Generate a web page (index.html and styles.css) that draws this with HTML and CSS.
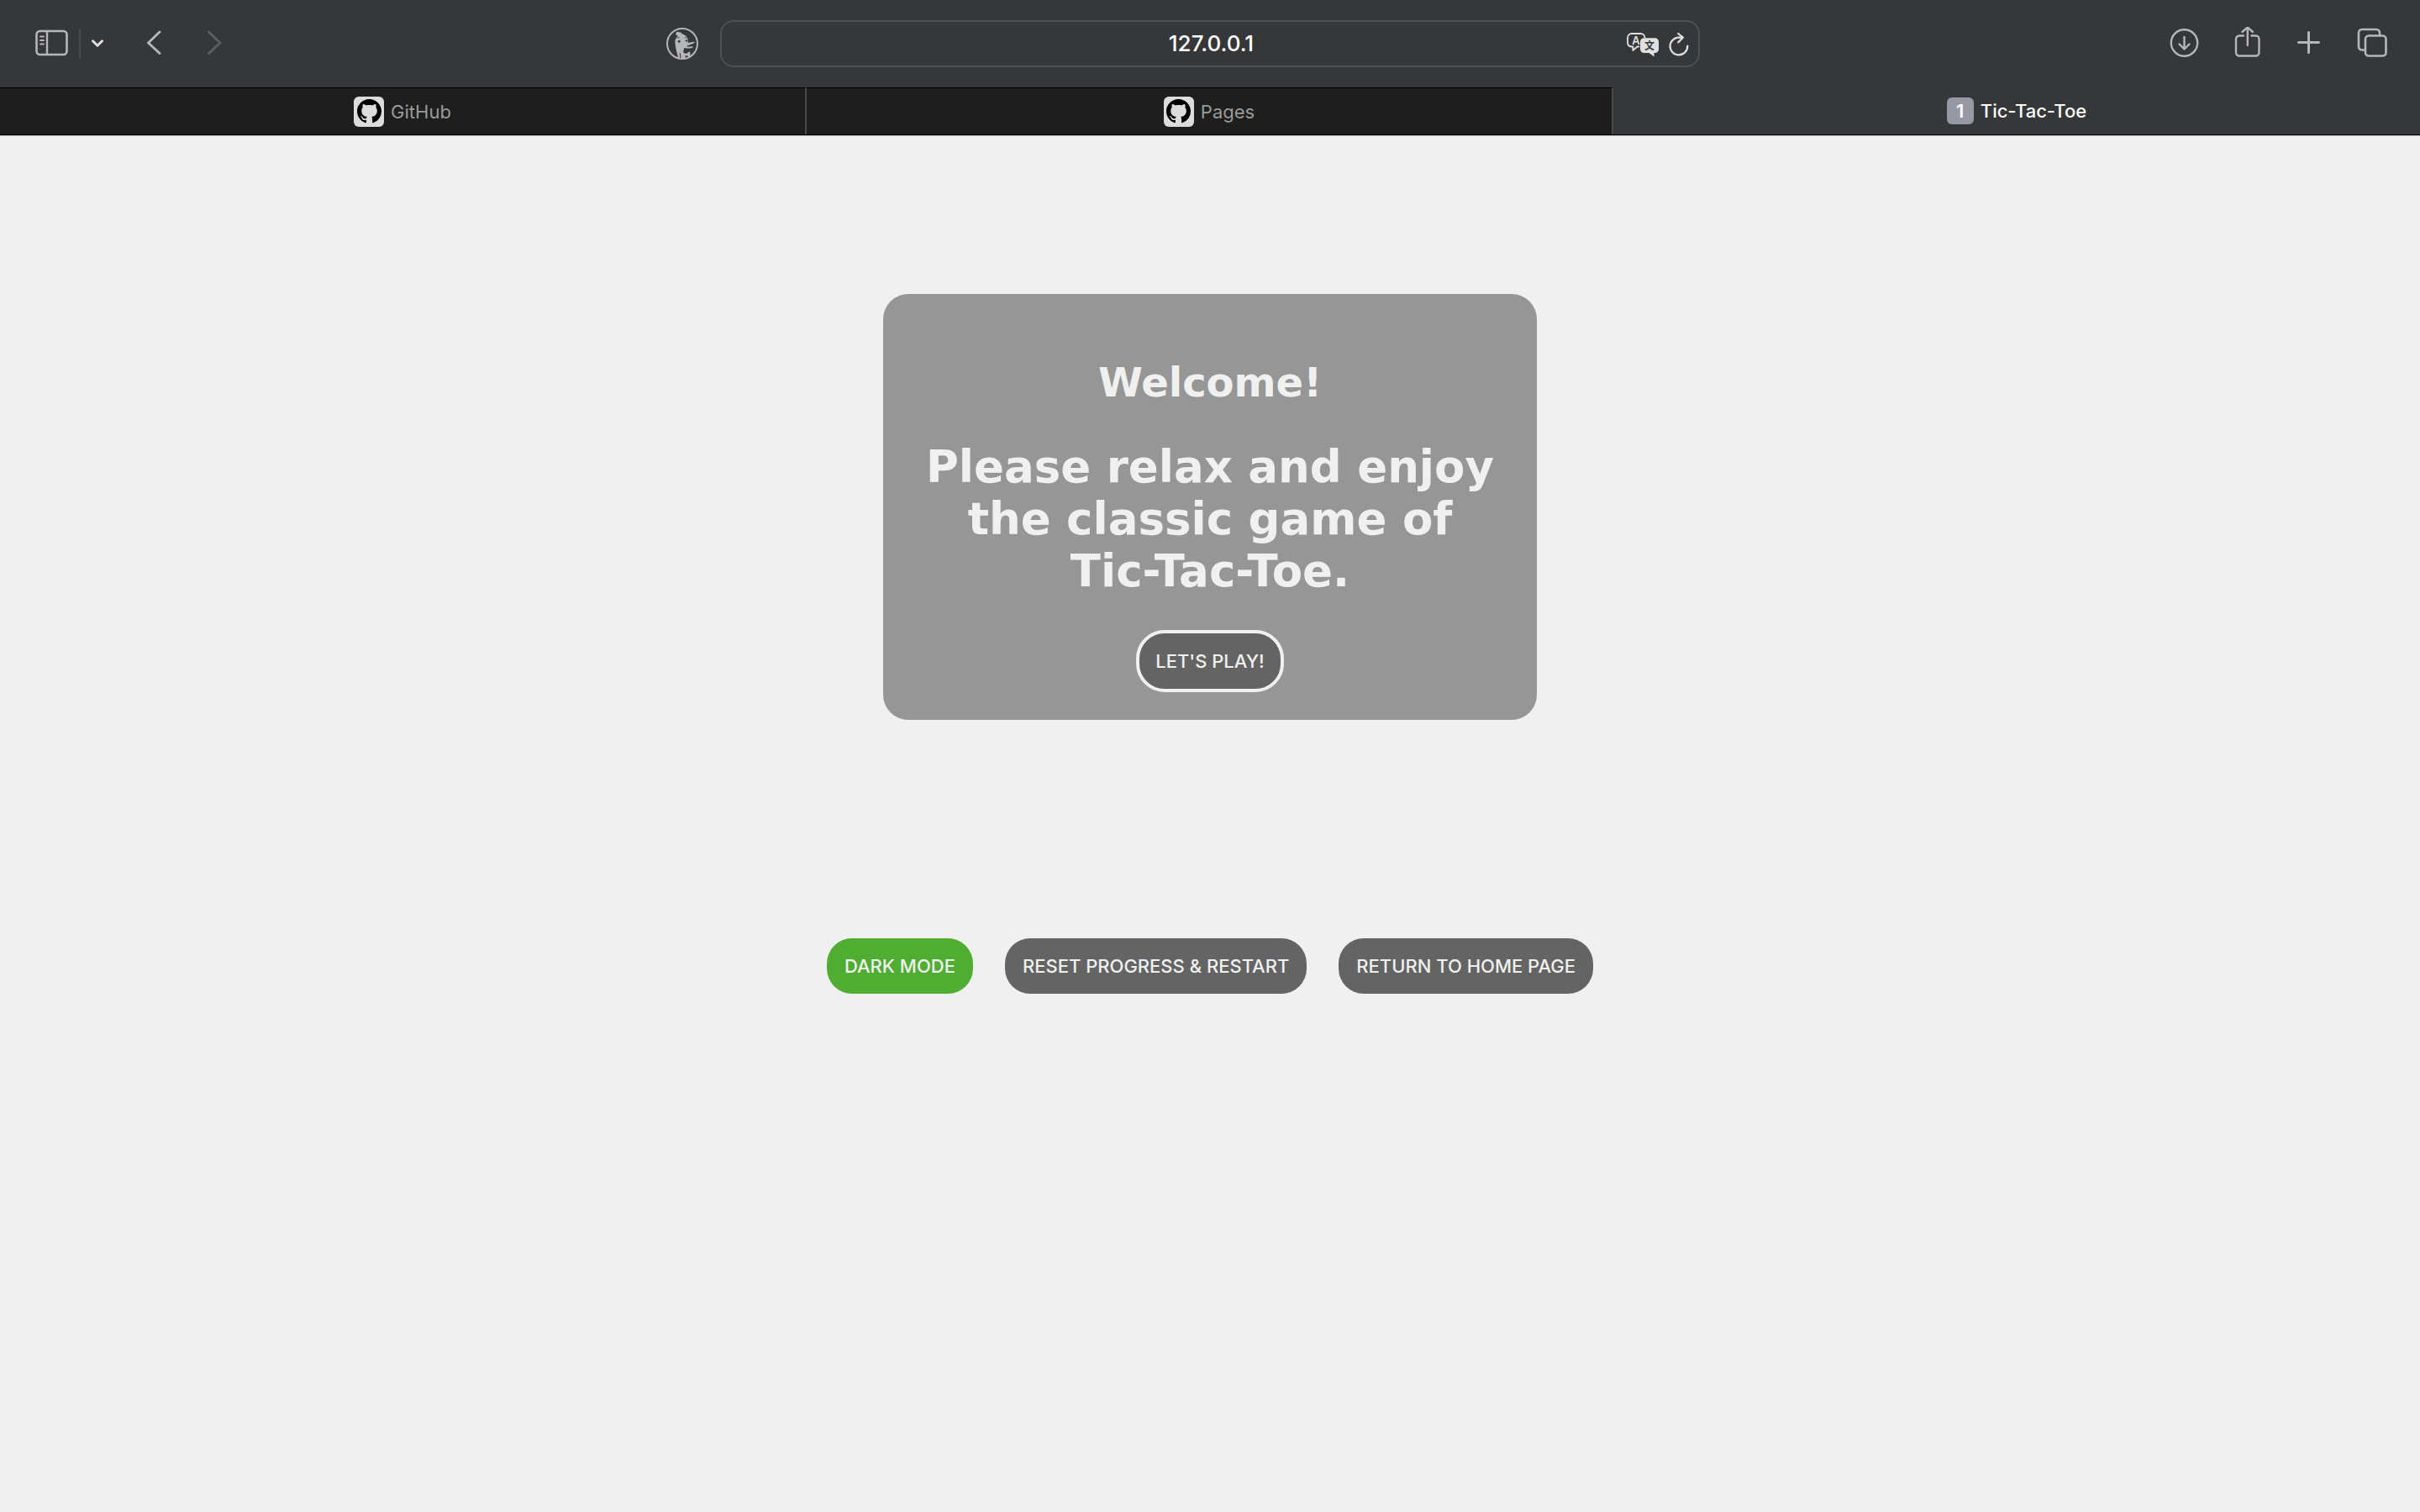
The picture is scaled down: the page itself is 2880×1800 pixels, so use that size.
FILE: index.html
```html
<!DOCTYPE html>
<html lang="en">
<head>
<meta charset="utf-8">
<title>Tic-Tac-Toe</title>
<link rel="stylesheet" href="styles.css">
</head>
<body>
<svg class="sprite" aria-hidden="true">
  <symbol id="octocat" viewBox="0 0 16 16">
    <path d="M8 0C3.58 0 0 3.58 0 8c0 3.54 2.29 6.53 5.47 7.59.4.07.55-.17.55-.38 0-.19-.01-.82-.01-1.49-2.01.37-2.53-.49-2.69-.94-.09-.23-.48-.94-.82-1.13-.28-.15-.68-.52-.01-.53.63-.01 1.08.58 1.23.82.72 1.21 1.87.87 2.33.66.07-.52.28-.87.51-1.07-1.78-.2-3.64-.89-3.64-3.95 0-.87.31-1.59.82-2.15-.08-.2-.36-1.02.08-2.12 0 0 .67-.21 2.2.82.64-.18 1.32-.27 2-.27.68 0 1.36.09 2 .27 1.53-1.04 2.2-.82 2.2-.82.44 1.1.16 1.92.08 2.12.51.56.82 1.27.82 2.15 0 3.07-1.87 3.75-3.65 3.95.29.25.54.73.54 1.48 0 1.07-.01 1.93-.01 2.2 0 .21.15.46.55.38A8.01 8.01 0 0 0 16 8c0-4.42-3.58-8-8-8Z"/>
  </symbol>
</svg>

<header class="browser">
  <div class="toolbar">
    <div class="tools-left">
      <button class="icon-button" type="button" aria-label="Show sidebar">
        <svg width="40" height="40" viewBox="0 0 40 40" fill="none" stroke="currentColor" stroke-linecap="round">
          <rect x="1.5" y="5" width="36" height="28" rx="4" stroke-width="2.6"/>
          <path d="M14 5v28" stroke-width="2.4"/>
          <path d="M6 11.5h4M6 16h4M6 20.500h4" stroke-width="2"/>
        </svg>
      </button>
      <span class="divider"></span>
      <button class="icon-button icon-button--bright" type="button" aria-label="Tab groups">
        <svg width="16" height="40" viewBox="0 0 16 40" fill="none" stroke="currentColor" stroke-width="3" stroke-linecap="round" stroke-linejoin="round">
          <path d="M2.500 16.800 8 22.300l5.500-5.500"/>
        </svg>
      </button>
      <button class="icon-button nav-back" type="button" aria-label="Back">
        <svg width="18" height="40" viewBox="0 0 18 40" fill="none" stroke="currentColor" stroke-width="3" stroke-linecap="round" stroke-linejoin="round">
          <path d="M16 6 2.500 19 16 31.500"/>
        </svg>
      </button>
      <button class="icon-button nav-forward" type="button" aria-label="Forward" disabled>
        <svg width="18" height="40" viewBox="0 0 18 40" fill="none" stroke="currentColor" stroke-width="3" stroke-linecap="round" stroke-linejoin="round">
          <path d="M2.500 6 16 19 2.500 31.500"/>
        </svg>
      </button>
      <button class="icon-button privacy" type="button" aria-label="DuckDuckGo Privacy">
        <svg width="40" height="40" viewBox="0 0 40 40">
          <circle cx="20" cy="20" r="18" fill="none" stroke="currentColor" stroke-width="2"/>
          <path fill="currentColor" d="M12.500 6.500c2.500-.9 5.500-.2 7.500 2 3.600.8 6.300 3.500 6.600 6.800.2 1.400.2 2.700.1 3.800 2.400-.1 5-1.400 7.500-1.300 1 .1.800 1-.1 1.500-2 1.200-5 2-7.900 2.900-1.600.7-1 1.300.4 1.300 2 .1 4.400-.4 5.800-.2.800.3.500 1.100-.4 1.500-3 1.200-6.500.9-9.200.2-1.300 1.500-1.700 3.600-1.400 5.800l3 1.200 4.400-2.700c.9 1.700.9 5 .3 7l-4-2.300-1.600.6.4 3.400-8.500-.2c-1.700-6-3.600-13-4-18.800-.2-3.800.9-6.800 3.600-8.300l-2.600-1.200z"/>
          <circle cx="16.200" cy="17.200" r="1.500" fill="#363739"/>
          <circle cx="25" cy="16.400" r="1.200" fill="#363739"/>
          <path d="M13.300 13.600c1-.9 2.100-1 3.200-.6M22.800 13c.7-.5 1.500-.5 2.100-.1M17.300 31l.5 6.500" fill="none" stroke="#363739"/>
        </svg>
      </button>
    </div>

    <div class="address">
      <input class="address-input" type="text" value="127.0.0.1" aria-label="Address">
      <button class="icon-button icon-button--bright" type="button" aria-label="Translate">
        <svg width="38" height="40" viewBox="0 0 38 40">
          <path d="M15 23.500H12.500L7.300 28v-4.500H6a5 5 0 0 1-5-4V13a5 5 0 0 1 5-5h10.500a5 5 0 0 1 5 5" fill="none" stroke="currentColor" stroke-width="1.800" stroke-linejoin="round"/>
          <text class="glyph-latin" x="11" y="20.500" text-anchor="middle">A</text>
          <path fill="currentColor" d="M20.500 13.200H33.500a4.500 4.500 0 0 1 4.500 4.500v8.800a4.500 4.500 0 0 1-4.500 4.500H32.500v4.500L26.500 31h-6a4.500 4.500 0 0 1-4.500-4.500v-8.800a4.500 4.500 0 0 1 4.500-4.500z"/>
          <text class="glyph-han" x="27" y="26.500" text-anchor="middle">文</text>
        </svg>
      </button>
      <button class="icon-button icon-button--bright" type="button" aria-label="Reload">
        <svg width="24" height="40" viewBox="0 0 24 40" fill="none" stroke="currentColor" stroke-width="2.200" stroke-linecap="round" stroke-linejoin="round">
          <path d="M22.300 22.500A10.400 10.400 0 1 1 12 12.600h4.500M11.200 8l5.700 4.700-5.700 5.700"/>
        </svg>
      </button>
    </div>

    <div class="tools-right">
      <button class="icon-button" type="button" aria-label="Downloads">
        <svg width="36" height="40" viewBox="0 0 36 40" fill="none" stroke="currentColor" stroke-width="2.400" stroke-linecap="round" stroke-linejoin="round">
          <circle cx="18.500" cy="19" r="15.700"/>
          <path d="M18.500 12v14.500M12.500 20.500l6 6 6-6"/>
        </svg>
      </button>
      <button class="icon-button" type="button" aria-label="Share">
        <svg width="32" height="40" viewBox="0 0 32 40" fill="none" stroke="currentColor" stroke-width="2.400" stroke-linecap="round" stroke-linejoin="round">
          <path d="M11 10.500H6a4 4 0 0 0-4 4V30.500a4 4 0 0 0 4 4H25.500a4 4 0 0 0 4-4v-16a4 4 0 0 0-4-4h-5"/>
          <path d="M15.800 22V1M9.500 6l6.300-5.500L22 6"/>
        </svg>
      </button>
      <button class="icon-button" type="button" aria-label="New tab">
        <svg width="30" height="40" viewBox="0 0 30 40" fill="none" stroke="currentColor" stroke-width="3" stroke-linecap="round">
          <path d="M2.500 18.500h24M14.500 6.500v24"/>
        </svg>
      </button>
      <button class="icon-button" type="button" aria-label="Tab overview">
        <svg width="36" height="40" viewBox="0 0 36 40" fill="none" stroke="currentColor" stroke-width="2.600">
          <path d="M9 27.500H6a4 4 0 0 1-4-4V7a4 4 0 0 1 4-4H23a4 4 0 0 1 4 4v3"/>
          <rect x="10" y="10.500" width="24.500" height="24" rx="4"/>
        </svg>
      </button>
    </div>
  </div>

  <nav class="tabs" aria-label="Tabs">
    <a class="tab" href="#github">
      <span class="favicon"><svg width="29" height="29"><use href="#octocat"/></svg></span>
      GitHub
    </a>
    <a class="tab" href="#pages">
      <span class="favicon"><svg width="29" height="29"><use href="#octocat"/></svg></span>
      Pages
    </a>
    <a class="tab tab--active" href="#game" aria-current="page">
      <span class="count">1</span>
      Tic-Tac-Toe
    </a>
  </nav>
</header>

<main class="page">
  <section class="card">
    <h1 class="card-text">Welcome!</h1>
    <h2 class="card-text card-text--intro">Please relax and enjoy the classic game of <span class="game-name">Tic-Tac-Toe.</span></h2>
    <button class="pill pill--outlined" type="button">LET'S PLAY!</button>
  </section>
  <div class="actions">
    <button class="pill pill--green" type="button">DARK MODE</button>
    <button class="pill" type="button">RESET PROGRESS &amp; RESTART</button>
    <button class="pill" type="button">RETURN TO HOME PAGE</button>
  </div>
</main>
</body>
</html>
```
FILE: styles.css
```css
:root {
  --chrome: #363739;
  --paper: #f0f0f0;
  --ui-font: Inter, "Liberation Sans", sans-serif;
}

* {
  box-sizing: border-box;
}

body {
  margin: 0;
  min-height: 100vh;
  background: var(--paper);
  font-family: var(--ui-font);
  font-size: 22px;
}

.sprite {
  display: none;
}

/* Browser chrome */

.browser {
  background: var(--chrome);
  border-bottom: 1px solid #b4b4b4;
}

.toolbar {
  display: grid;
  grid-template-columns: 1fr 40.5% 1fr;
  align-items: center;
  height: 104px;
}

.tools-left,
.tools-right {
  display: flex;
  align-items: center;
}

.tools-left {
  gap: 12px;
  padding: 0 25px 0 42px;
}

.tools-right {
  justify-content: flex-end;
  gap: 42px;
  padding-right: 39px;
}

.icon-button {
  display: block;
  flex: none;
  padding: 0;
  border: 0;
  background: none;
  color: #b5b6b9;
}

.icon-button svg {
  display: block;
}

.icon-button--bright {
  color: #e0e0e0;
}

.divider {
  width: 2px;
  height: 36px;
  background: #4b4c4e;
}

.nav-back {
  margin-left: 38px;
}

.nav-forward {
  margin-left: 42px;
  color: #5c5d5f;
}

.privacy {
  margin-left: auto;
}

.address {
  display: flex;
  align-items: center;
  gap: 12px;
  height: 56px;
  padding: 0 11px 0 100px;
  border: 2px solid #4e4f51;
  border-radius: 16px;
}

.address-input {
  flex: 1;
  min-width: 0;
  padding: 0;
  border: 0;
  outline: 0;
  background: none;
  color: #fff;
  font: 500 26px/32px var(--ui-font);
  text-align: center;
}

.glyph-latin {
  fill: currentColor;
  font: 600 13px Inter, sans-serif;
}

.glyph-han {
  fill: var(--chrome);
  font: 700 12px "Noto Sans CJK SC", sans-serif;
}

.tabs {
  display: grid;
  grid-template-columns: repeat(3, 1fr);
  height: 57px;
  border-bottom: 1px solid #000;
}

.tab {
  display: flex;
  align-items: center;
  justify-content: center;
  gap: 8px;
  border-top: 1px solid #000;
  border-right: 2px solid #4a4a4b;
  background: #1e1e1e;
  color: #9a9a9a;
  text-decoration: none;
}

.tab--active {
  border: 0;
  background: var(--chrome);
  color: #fff;
  font-weight: 500;
}

.favicon,
.count {
  display: flex;
  align-items: center;
  justify-content: center;
  border-radius: 6px;
}

.favicon {
  width: 36px;
  height: 36px;
  background: #dcdcdc;
}

.count {
  width: 32px;
  height: 32px;
  background: #9898a4;
  font-weight: 600;
}

/* Game page */

.page {
  display: flex;
  flex-direction: column;
  align-items: center;
  gap: 260px;
  padding: 188px 0 80px;
}

.card {
  display: flex;
  flex-direction: column;
  align-items: center;
  gap: 39px;
  width: 27%;
  min-width: 760px;
  padding: 74px 30px 33px;
  border-radius: 30px;
  background: #969696;
}

.card-text {
  margin: 0;
  color: var(--paper);
  font: bold 48px/62px Chalkduster, "DejaVu Sans", sans-serif;
  text-align: center;
}

.card-text--intro {
  font-size: 53px;
}

.game-name {
  white-space: nowrap;
}

.actions {
  display: flex;
  flex-wrap: wrap;
  justify-content: center;
  gap: 38px;
}

.pill {
  height: 66px;
  padding: 0 21px;
  border: 0;
  border-radius: 30px;
  background: #646464;
  color: var(--paper);
  font: 450 22px/28px var(--ui-font);
}

.pill--outlined {
  height: 74px;
  padding: 0 19px;
  border: 4px solid var(--paper);
  border-radius: 34px;
}

.pill--green {
  background: #4fad32;
}
```
